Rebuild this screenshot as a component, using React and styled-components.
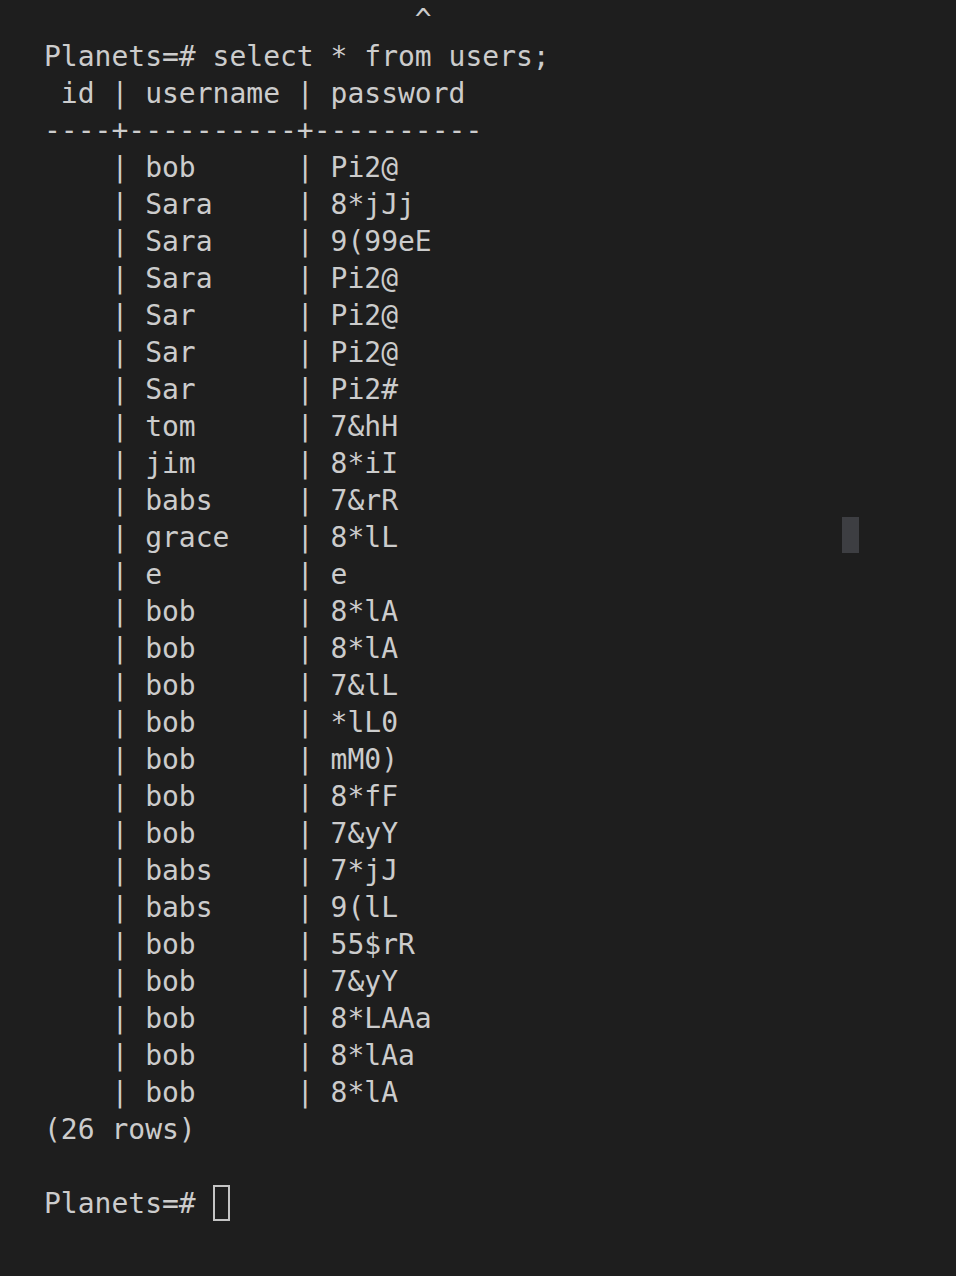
import React from 'react'
import styled, { createGlobalStyle } from 'styled-components'

const GlobalStyle = createGlobalStyle`
    html, body {
        margin: 0;
        padding: 0;
        background: #1e1e1e;
    }
`

const rows = [
    ['bob', 'Pi2@'],
    ['Sara', '8*jJj'],
    ['Sara', '9(99eE'],
    ['Sara', 'Pi2@'],
    ['Sar', 'Pi2@'],
    ['Sar', 'Pi2@'],
    ['Sar', 'Pi2#'],
    ['tom', '7&hH'],
    ['jim', '8*iI'],
    ['babs', '7&rR'],
    ['grace', '8*lL'],
    ['e', 'e'],
    ['bob', '8*lA'],
    ['bob', '8*lA'],
    ['bob', '7&lL'],
    ['bob', '*lL0'],
    ['bob', 'mM0)'],
    ['bob', '8*fF'],
    ['bob', '7&yY'],
    ['babs', '7*jJ'],
    ['babs', '9(lL'],
    ['bob', '55$rR'],
    ['bob', '7&yY'],
    ['bob', '8*LAAa'],
    ['bob', '8*lAa'],
    ['bob', '8*lA'],
]

const App = () => {
    return (
        <>
            <GlobalStyle />
            <Terminal>
                <Line>{' '.repeat(22) + '^'}</Line>
                <Line>Planets=# select * from users;</Line>
                <Line> id | username | password</Line>
                <Line>----+----------+----------</Line>
                {rows.map(([user, pass], i) => (
                    <Line key={i}>{'    | ' + user.padEnd(8, ' ') + ' | ' + pass}</Line>
                ))}
                <Line>(26 rows)</Line>
                <Line> </Line>
                <Line>
                    Planets=# <Cursor />
                </Line>
                <Marker />
            </Terminal>
        </>
    )
}

export default App

const Terminal = styled.main`
    position: relative;
    box-sizing: border-box;
    width: 956px;
    height: 1276px;
    padding: 1px 0 0 44px;
    background: #1e1e1e;
    color: #cccccc;
    font-family: "DejaVu Sans Mono", "Liberation Mono", monospace;
    font-size: 28px;
    overflow: hidden;
`

const Line = styled.div`
    height: 37px;
    line-height: 37px;
    white-space: pre;
`

const Cursor = styled.span`
    display: inline-block;
    box-sizing: border-box;
    width: 17px;
    height: 36px;
    vertical-align: middle;
    border: 2px solid #c4c4c4;
    margin-top: -4px;
`

const Marker = styled.div`
    position: absolute;
    left: 842px;
    top: 517px;
    width: 17px;
    height: 36px;
    background: #3d3e42;
`
